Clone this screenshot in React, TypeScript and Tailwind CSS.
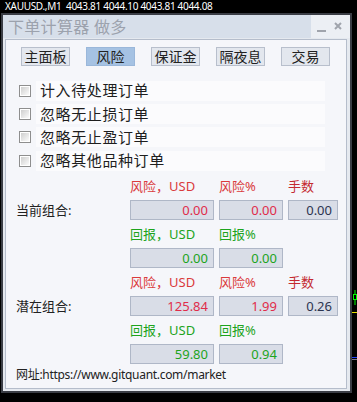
import React from "react";

const cjk = { fontFamily: '"Noto Sans", "Noto Sans CJK SC", sans-serif' };

function Tab({ label, active }: { label: string; active?: boolean }) {
  return (
    <div
      className={
        "w-[49px] h-[19px] flex items-center justify-center text-[14px] leading-none text-[#222] border " +
        (active ? "bg-[#a5c2e3] border-[#9ab7da]" : "bg-[#e3e7ee] border-[#b8bfcc]")
      }
    >
      {label}
    </div>
  );
}

function Check({ label }: { label: string }) {
  return (
    <div className="h-[23.33px] flex items-center">
      <div className="w-[12px] h-[12px] border border-[#8e8e8e] bg-white p-[1px]">
        <div className="w-full h-full bg-gradient-to-br from-[#cfcfcf] to-[#fbfbfb]" />
      </div>
      <div className="ml-[5px] w-[289px] h-[20px] bg-[#fbfbfd] flex items-center pl-[4px] text-[15px] tracking-[0.6px] text-[#1e1e1e]">
        {label}
      </div>
    </div>
  );
}

function Box({ v, color, w }: { v: string; color: string; w: string }) {
  return (
    <div
      className={
        "h-[20px] bg-[#d9dde7] border border-[#afb7c7] flex items-center justify-end pr-[5px] text-[13px] leading-none " +
        w
      }
      style={{ color }}
    >
      {v}
    </div>
  );
}

const RED_L = "#da3a3c";
const RED_D = "#c42a30";
const RED_V = "#e02c4a";
const GREEN = "#1da41d";
const NAVY = "#2c3450";

function Block({
  name,
  r1,
  r2,
  lots,
  g1,
  g2,
}: {
  name: string;
  r1: string;
  r2: string;
  lots: string;
  g1: string;
  g2: string;
}) {
  return (
    <>
      <div className="grid grid-cols-[109px_84px_64px_50px] gap-x-[5px] h-[28px] items-center text-[13px]">
        <div />
        <div style={{ color: RED_L }}>风险，USD</div>
        <div style={{ color: RED_L }}>风险%</div>
        <div style={{ color: RED_D }}>手数</div>
      </div>
      <div className="grid grid-cols-[109px_84px_64px_50px] gap-x-[5px] h-[20px] items-center">
        <div className="text-[13px] text-[#222]">{name}</div>
        <Box v={r1} color={RED_V} w="w-[84px]" />
        <Box v={r2} color={RED_V} w="w-[64px]" />
        <Box v={lots} color={NAVY} w="w-[50px]" />
      </div>
      <div className="grid grid-cols-[109px_84px_64px_50px] gap-x-[5px] h-[28px] items-center text-[13px]">
        <div />
        <div style={{ color: GREEN }}>回报，USD</div>
        <div style={{ color: GREEN }}>回报%</div>
        <div />
      </div>
      <div className="grid grid-cols-[109px_84px_64px_50px] gap-x-[5px] h-[20px] items-center">
        <div />
        <Box v={g1} color={GREEN} w="w-[84px]" />
        <Box v={g2} color={GREEN} w="w-[64px]" />
        <div />
      </div>
    </>
  );
}

export default function App() {
  return (
    <div className="relative w-[357px] h-[402px] bg-black overflow-hidden" style={cjk}>
      <div
        className="h-[13px] pl-[5px] text-white text-[10px] leading-[13px] tracking-[-0.3px] whitespace-pre"
        style={{ fontFamily: '"Noto Sans", sans-serif' }}
      >
        XAUUSD.,M1  4043.81 4044.10 4043.81 4044.08
      </div>
      <div className="ml-[1px] w-[351px] h-[380px] border-2 border-[#3a3d45] flex flex-col bg-[#e5e9ef]">
        <div className="h-[23px] flex">
          <div className="flex-1 bg-[#d7dfea] flex items-center pl-[5px] text-[16px] text-[#9ca2ad] tracking-[0.3px]">
            下单计算器 做多
          </div>
          <div className="w-[39px] bg-[#eceff4] flex items-center pl-[6px] gap-[8px] text-[#9a9ea6]">
            <div className="w-[9px] h-[2px] bg-[#a0a4ac] mt-[8px]" />
            <svg width="8" height="8" viewBox="0 0 8 8" className="mt-[-2px]">
              <path d="M1 1 L7 7 M7 1 L1 7" stroke="#a0a4ac" strokeWidth="2" />
            </svg>
          </div>
        </div>
        <div className="flex-1 pl-[2px] pr-[3px] pt-[1px] pb-[2px]">
          <div className="h-full border border-[#b5bdcb] bg-[#f5f6fa] flex flex-col">
            <div className="flex gap-[16px] pl-[15px] pt-[7px]">
              <Tab label="主面板" />
              <Tab label="风险" active />
              <Tab label="保证金" />
              <Tab label="隔夜息" />
              <Tab label="交易" />
            </div>
            <div className="mt-[13px] pl-[13px] flex flex-col">
              <Check label="计入待处理订单" />
              <Check label="忽略无止损订单" />
              <Check label="忽略无止盈订单" />
              <Check label="忽略其他品种订单" />
            </div>
            <div className="pl-[10px] flex flex-col">
              <Block name="当前组合:" r1="0.00" r2="0.00" lots="0.00" g1="0.00" g2="0.00" />
              <Block name="潜在组合:" r1="125.84" r2="1.99" lots="0.26" g1="59.80" g2="0.94" />
              <div className="h-[22px] flex items-center text-[12px] tracking-[-0.3px] text-[#222]">
                网址:https://www.gitquant.com/market
              </div>
            </div>
          </div>
        </div>
      </div>
      <svg className="absolute left-[352px] top-0" width="5" height="402">
        <line x1="3" y1="290" x2="3" y2="305" stroke="#00ff00" strokeWidth="1" />
        <rect x="1.5" y="294.5" width="3" height="5" fill="black" stroke="#00ff00" strokeWidth="1" />
        <line x1="0" y1="312.5" x2="5" y2="312.5" stroke="#e6e000" strokeWidth="1" />
        <line x1="0" y1="357.5" x2="5" y2="357.5" stroke="#2040ff" strokeWidth="1" />
        <line x1="0" y1="359.5" x2="5" y2="359.5" stroke="#7a7a90" strokeWidth="1" />
      </svg>
    </div>
  );
}
